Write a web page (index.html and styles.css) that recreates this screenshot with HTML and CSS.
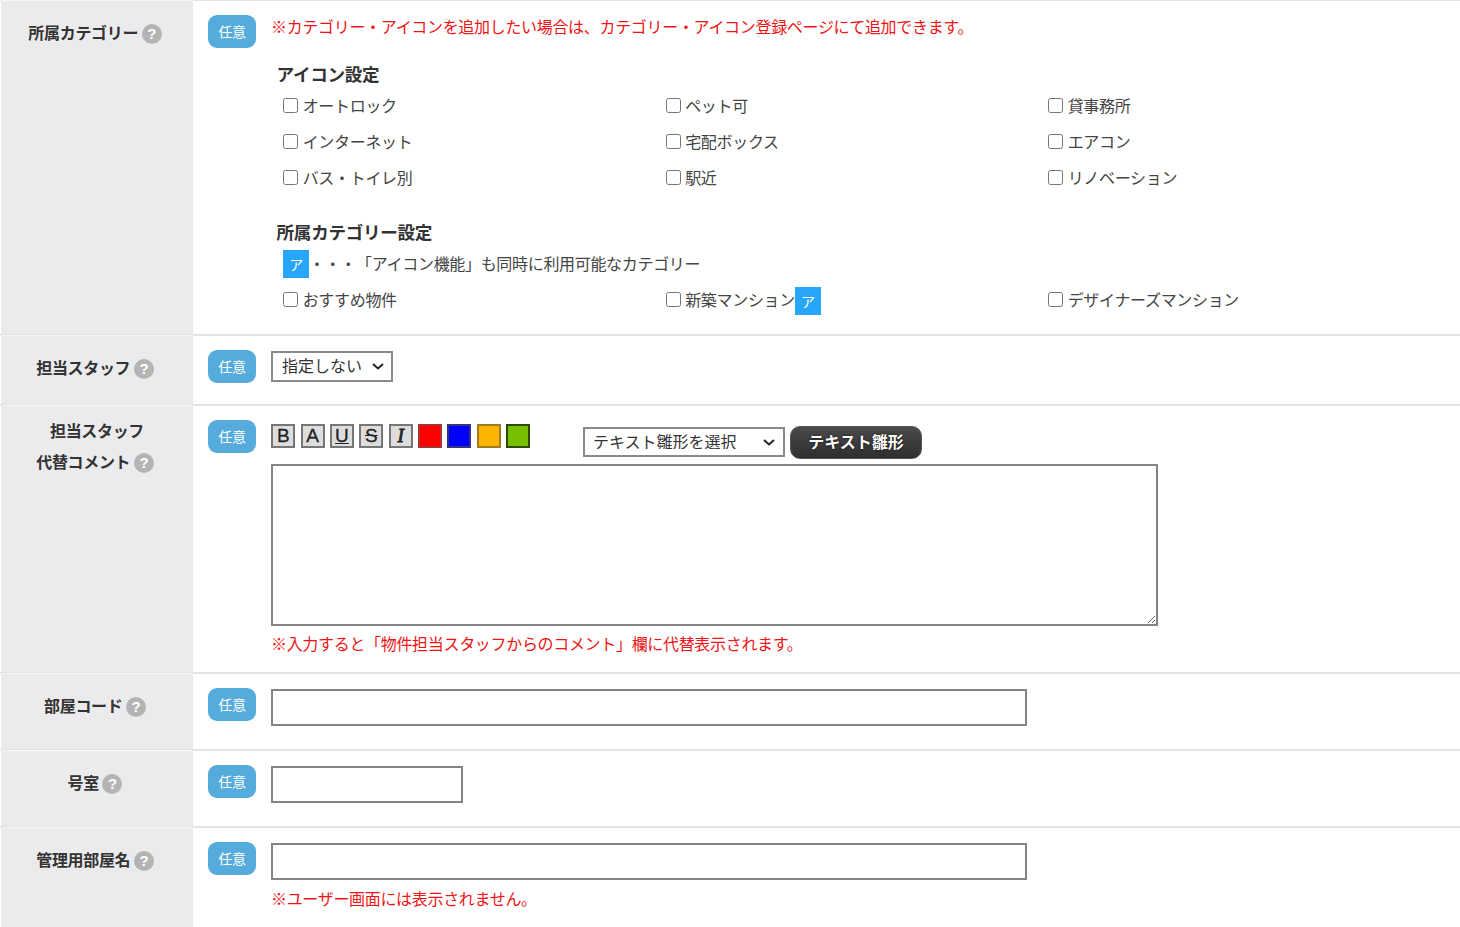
FILE: index.html
```html
<!DOCTYPE html>
<html lang="ja">
<head>
    <meta charset="UTF-8">
    <meta name="viewport" content="width=device-width, initial-scale=1.0">
    <title>物件登録</title>
    <link rel="stylesheet" href="styles.css">
</head>
<body>
    <div class="form-row row-category">
        <div class="form-label"><span>所属カテゴリー<i class="help">?</i></span></div>
        <div class="form-body">
            <div class="badge-col"><span class="badge">任意</span></div>
            <div class="form-main">
                <p class="note note-top">※カテゴリー・アイコンを追加したい場合は、カテゴリー・アイコン登録ページにて追加できます。</p>
                <h3 class="sub-title">アイコン設定</h3>
                <div class="check-grid">
                    <label><input type="checkbox">オートロック</label>
                    <label><input type="checkbox">ペット可</label>
                    <label><input type="checkbox">貸事務所</label>
                    <label><input type="checkbox">インターネット</label>
                    <label><input type="checkbox">宅配ボックス</label>
                    <label><input type="checkbox">エアコン</label>
                    <label><input type="checkbox">バス・トイレ別</label>
                    <label><input type="checkbox">駅近</label>
                    <label><input type="checkbox">リノベーション</label>
                </div>
                <h3 class="sub-title sub-title-second">所属カテゴリー設定</h3>
                <p class="legend"><span class="mark">ア</span>・・・「アイコン機能」も同時に利用可能なカテゴリー</p>
                <div class="check-grid">
                    <label><input type="checkbox">おすすめ物件</label>
                    <label><input type="checkbox">新築マンション<span class="mark">ア</span></label>
                    <label><input type="checkbox">デザイナーズマンション</label>
                </div>
            </div>
        </div>
    </div>

    <div class="form-row row-staff">
        <div class="form-label"><span>担当スタッフ<i class="help">?</i></span></div>
        <div class="form-body">
            <div class="badge-col"><span class="badge">任意</span></div>
            <div class="form-main">
                <select class="select select-staff"><option>指定しない</option></select>
            </div>
        </div>
    </div>

    <div class="form-row row-comment">
        <div class="form-label label-two-lines"><span>担当スタッフ<br>代替コメント<i class="help">?</i></span></div>
        <div class="form-body">
            <div class="badge-col"><span class="badge">任意</span></div>
            <div class="form-main">
                <div class="toolbar">
                    <button class="tool tool-b">B</button>
                    <button class="tool tool-a">A</button>
                    <button class="tool tool-u">U</button>
                    <button class="tool tool-s">S</button>
                    <button class="tool tool-i">I</button>
                    <button class="tool swatch-red"></button>
                    <button class="tool swatch-blue"></button>
                    <button class="tool swatch-orange"></button>
                    <button class="tool swatch-green"></button>
                    <select class="select select-template"><option>テキスト雛形を選択</option></select>
                    <button class="template-btn">テキスト雛形</button>
                </div>
                <textarea class="comment-area"></textarea>
                <p class="note note-comment">※入力すると「物件担当スタッフからのコメント」欄に代替表示されます。</p>
            </div>
        </div>
    </div>

    <div class="form-row row-input">
        <div class="form-label"><span>部屋コード<i class="help">?</i></span></div>
        <div class="form-body">
            <div class="badge-col"><span class="badge">任意</span></div>
            <div class="form-main"><input class="text-input input-long" type="text"></div>
        </div>
    </div>

    <div class="form-row row-input">
        <div class="form-label"><span>号室<i class="help">?</i></span></div>
        <div class="form-body">
            <div class="badge-col"><span class="badge">任意</span></div>
            <div class="form-main"><input class="text-input input-short" type="text"></div>
        </div>
    </div>

    <div class="form-row row-last">
        <div class="form-label"><span>管理用部屋名<i class="help">?</i></span></div>
        <div class="form-body">
            <div class="badge-col"><span class="badge">任意</span></div>
            <div class="form-main">
                <input class="text-input input-long" type="text">
                <p class="note note-last">※ユーザー画面には表示されません。</p>
            </div>
        </div>
    </div>
</body>
</html>
```

FILE: styles.css
```css
html, body {
    margin: 0;
    padding: 0;
    height: 927px;
    overflow: hidden;
}
body {
    background-color: #fff;
    color: #444;
    font-family: "Noto Sans CJK JP", "Noto Sans", sans-serif;
    font-size: 16px;
    line-height: 24px;
    letter-spacing: -0.32px;
    text-spacing-trim: space-all;
}
p, h3 {
    margin: 0;
}
.form-row {
    display: flex;
    box-sizing: border-box;
    border-top: 2px solid #e3e3e3;
}
.row-category {
    height: 334px;
    border-top-width: 1px;
}
.row-staff {
    height: 70px;
}
.row-comment {
    height: 268px;
}
.row-input {
    height: 77px;
}
.row-last {
    height: 101px;
}
.form-label {
    width: 192px;
    margin-left: 1px;
    padding-top: 19px;
    box-sizing: border-box;
    background-color: #ebebee;
    box-shadow: 0 -1px #f6f6f6;
    color: #333;
    font-weight: bold;
    text-align: center;
}
.label-two-lines {
    line-height: 31px;
    padding-top: 9px;
}
.help {
    display: inline-block;
    width: 20px;
    height: 20px;
    margin: 0 4px 0 3.5px;
    border-radius: 50%;
    background-color: #b4b4b4;
    color: #fff;
    font-family: "Liberation Sans", sans-serif;
    font-size: 15px;
    font-style: normal;
    font-weight: bold;
    line-height: 20px;
    text-align: center;
}
.form-body {
    flex: 1;
    display: flex;
    padding: 14px 0 0 15px;
}
.badge-col {
    width: 63px;
}
.badge {
    display: block;
    width: 48px;
    height: 33px;
    border-radius: 9px;
    background-color: #55acdc;
    color: #fff;
    font-size: 14px;
    line-height: 32px;
    text-align: center;
}
.form-main {
    flex: 1;
}
.note {
    color: #f01414;
}
.note-top {
    margin-top: -1px;
}
.sub-title {
    margin: 24px 0 0 5.6px;
    color: #333;
    font-size: 17.6px;
    font-weight: bold;
}
.sub-title-second {
    margin-top: 25px;
}
.check-grid {
    display: grid;
    grid-template-columns: 382.5px 382.5px 382.5px;
    grid-auto-rows: 36px;
    margin: 1px 0 0 12px;
}
.check-grid label {
    display: flex;
    align-items: center;
}
.check-grid input {
    width: 15px;
    height: 15px;
    margin: 0 4.7px 0 0;
}
.mark {
    display: inline-block;
    flex: none;
    width: 26px;
    height: 28px;
    background-color: #27a6fa;
    color: #fff;
    font-size: 14px;
    line-height: 29px;
    text-align: center;
}
.check-grid .mark {
    margin-top: 4px;
}
.legend {
    margin: 6px 0 3px 12px;
    padding-bottom: 2px;
    display: flex;
    align-items: center;
    height: 26px;
}
.legend .mark {
    margin-bottom: -2px;
}
.select {
    appearance: none;
    border: 2px solid #8a8a8a;
    background: #fff url("data:image/svg+xml,%3Csvg xmlns='http://www.w3.org/2000/svg' width='12' height='7'%3E%3Cpath d='M1 1l5 4.5L11 1' fill='none' stroke='%23222' stroke-width='2'/%3E%3C/svg%3E") no-repeat;
    color: #333;
    font-family: inherit;
    font-size: 16px;
    padding: 0 0 6px 9px;
    box-sizing: border-box;
    border-radius: 0;
}
.select-staff {
    display: block;
    width: 122px;
    height: 31px;
    margin-top: 1px;
    background-position: 99px 10px;
}
.toolbar {
    display: flex;
    align-items: flex-start;
    height: 44px;
}
.tool {
    box-sizing: border-box;
    flex: none;
    width: 24px;
    height: 24px;
    margin: 4px 5.35px 0 0;
    padding: 0;
    border: 2px solid #777;
    background-color: #ddd;
    color: #222;
    font-family: "Liberation Sans", sans-serif;
    font-size: 19px;
    line-height: 20px;
    text-align: center;
    -webkit-text-stroke: 0.3px #222;
}
.tool-b {
    margin-left: 0.3px;
}
.tool-u {
    text-decoration: underline;
}
.tool-s {
    text-decoration: line-through;
}
.tool-i {
    font-family: "Liberation Serif", serif;
    font-style: italic;
    -webkit-text-stroke: 0.8px #222;
}
.swatch-red {
    background-color: #ff0000;
    border-color: #a33;
}
.swatch-blue {
    background-color: #0000ff;
    border-color: #338;
}
.swatch-orange {
    background-color: #ffb400;
    border-color: #a07a20;
}
.swatch-green {
    background-color: #76c000;
    border-color: #2f4a00;
}
.select-template {
    flex: none;
    width: 202px;
    height: 30px;
    margin: 7px 5px 0 47.5px;
    padding-left: 8px;
    background-position: 178px 10px;
}
.template-btn {
    box-sizing: border-box;
    flex: none;
    width: 132px;
    height: 33px;
    margin-top: 6px;
    padding: 0 0 3px;
    border: 1px solid #555;
    border-radius: 10px;
    background: linear-gradient(#4a4a4a, #2e2e2e);
    color: #fff;
    font-family: inherit;
    font-size: 16px;
    font-weight: bold;
    text-shadow: 0 0 2px #000;
}
.comment-area {
    display: block;
    box-sizing: border-box;
    width: 887px;
    height: 162px;
    border: 2px solid #858585;
    border-radius: 0;
    outline: none;
}
.note-comment {
    margin-top: 5px;
}
.text-input {
    display: block;
    box-sizing: border-box;
    height: 37px;
    margin-top: 1px;
    border: 2px solid #858585;
    border-radius: 0;
    outline: none;
}
.input-long {
    width: 756px;
}
.input-short {
    width: 192px;
}
.note-last {
    margin-top: 6px;
}
```
